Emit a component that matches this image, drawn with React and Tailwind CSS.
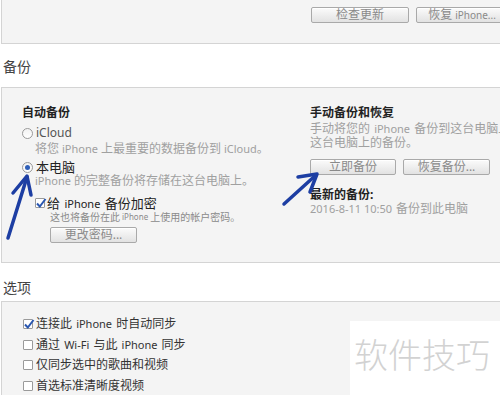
import React from "react";

const font = "font-['Noto_Sans','Noto_Sans_CJK_SC',sans-serif]";

function Btn({ children, w }) {
  return (
    <div
      className={`h-[16px] ${w} shrink-0 rounded-[2px] border border-[#a9a9a9] bg-gradient-to-b from-[#fbfbfb] to-[#e2e2e2] flex items-center justify-center text-[12px] leading-none text-[#8a8a8a] shadow-[inset_0_1px_0_#fff]`}
    >
      {children}
    </div>
  );
}

function Radio({ on }) {
  return (
    <div className="w-[11px] h-[11px] rounded-full border border-[#9a9a9a] bg-gradient-to-b from-[#f2f2f2] to-white flex items-center justify-center shrink-0">
      {on && <div className="w-[5px] h-[5px] rounded-full bg-[#2f5fb8]" />}
    </div>
  );
}

function Check({ on }) {
  return (
    <div className="w-[10px] h-[10px] border border-[#9a9a9a] bg-white rounded-[1px] shrink-0 relative">
      {on && (
        <svg className="absolute -left-[1px] -top-[2px]" width="12" height="12" viewBox="0 0 12 12">
          <path d="M2 6.5 L4.8 9.5 L10.5 2" fill="none" stroke="#2a57b0" strokeWidth="2" />
        </svg>
      )}
    </div>
  );
}

function Row({ children, className = "" }) {
  return <div className={`h-[14px] leading-[14px] flex items-center whitespace-nowrap ${className}`}>{children}</div>;
}

export default function App() {
  return (
    <div className={`relative w-[500px] h-[395px] overflow-hidden bg-white ${font} text-[12px] text-[#333]`}>
      {/* top panel */}
      <div className="h-[44px] ml-[1px] border-l border-b border-[#d4d4d4] bg-[#f4f4f4] flex justify-start pl-[309px] pt-[7px] gap-[7px] w-[540px]">
        <Btn w="w-[98px]">检查更新</Btn>
        <Btn w="w-[92px]">
          恢复 <span className="text-[10px] ml-[3px]">iPhone...</span>
        </Btn>
      </div>

      {/* 备份 */}
      <div className="h-[43px] flex items-center pl-[3px] pt-[1px] text-[14px] text-[#444]">备份</div>

      <div className="h-[176px] ml-[1px] w-[540px] border border-[#d4d4d4] bg-[#f4f4f4] flex">
        {/* left column */}
        <div className="w-[308px] shrink-0 pl-[20px] pt-[18px]">
          <Row className="font-bold text-[#222]">自动备份</Row>
          <Row className="mt-[6px] gap-[3px]">
            <Radio />
            <span className="text-[#555]">iCloud</span>
          </Row>
          <Row className="mt-[2px] pl-[13px] text-[#a0a0a0]">
            将您 <span className="text-[11px] mx-[3px]">iPhone</span> 上最重要的数据备份到 <span className="text-[11px] ml-[3px]">iCloud</span>。
          </Row>
          <Row className="mt-[4px] gap-[3px]">
            <Radio on />
            <span className="text-[#222] text-[13px]">本电脑</span>
          </Row>
          <Row className="pl-[13px] text-[#a0a0a0]">
            <span className="text-[11px] mr-[3px]">iPhone</span> 的完整备份将存储在这台电脑上。
          </Row>
          <Row className="mt-[8px] pl-[13px] gap-[2px]">
            <Check on />
            <span className="text-[#222] text-[13px]">
              给 <span className="text-[11px] mx-[1px]">iPhone</span> 备份加密
            </span>
          </Row>
          <Row className="pl-[28px] text-[10px] text-[#8a8a8a]">
            这也将备份在此 <span className="text-[8px] mx-[2px]">iPhone</span> 上使用的帐户密码。
          </Row>
          <div className="mt-[3px] pl-[28px]">
            <Btn w="w-[87px]">更改密码...</Btn>
          </div>
        </div>

        {/* right column */}
        <div className="shrink-0 pt-[18px]">
          <Row className="font-bold text-[#222]">手动备份和恢复</Row>
          <div className="mt-[2px] leading-[14px] text-[#a0a0a0] whitespace-nowrap">
            <div>
              手动将您的 <span className="text-[11px] mx-[1px]">iPhone</span> 备份到这台电脑上或手动恢复存储在
            </div>
            <div>这台电脑上的备份。</div>
          </div>
          <div className="mt-[9px] flex gap-[7px]">
            <Btn w="w-[86px]">立即备份</Btn>
            <Btn w="w-[87px]">恢复备份...</Btn>
          </div>
          <Row className="mt-[13px] font-bold text-[#222]">最新的备份:</Row>
          <div className="h-[13px] leading-[13px] flex items-center text-[#a0a0a0] whitespace-nowrap">
            <span className="text-[11px] mr-[4px]">2016-8-11 10:50</span>备份到此电脑
          </div>
        </div>
      </div>

      {/* 选项 */}
      <div className="h-[38px] flex items-center pl-[3px] pt-[10px] text-[14px] text-[#444]">选项</div>

      <div className="h-[120px] ml-[1px] w-[540px] border border-[#d4d4d4] bg-[#f4f4f4] pl-[21px] pt-[15px] flex flex-col gap-[6.5px]">
        <Row className="gap-[3px]">
          <Check on />
          <span>
            连接此 <span className="text-[11px] mx-[1px]">iPhone</span> 时自动同步
          </span>
        </Row>
        <Row className="gap-[3px]">
          <Check />
          <span>
            通过 <span className="text-[11px] mx-[1px]">Wi-Fi</span> 与此 <span className="text-[11px] mx-[1px]">iPhone</span> 同步
          </span>
        </Row>
        <Row className="gap-[3px]">
          <Check />
          <span>仅同步选中的歌曲和视频</span>
        </Row>
        <Row className="gap-[3px]">
          <Check />
          <span>首选标准清晰度视频</span>
        </Row>
      </div>

      {/* watermark */}
      <div className="absolute left-[350px] top-[321px] w-[150px] h-[74px] bg-white pl-[4px] pt-[15px]">
        <span className="text-[34px] leading-[38px] font-light text-[#d2d2d2] whitespace-nowrap">软件技巧</span>
      </div>

      {/* arrows */}
      <svg className="absolute left-0 top-0 pointer-events-none" width="500" height="395">
        <g fill="none" stroke="#1d3ea3" strokeWidth="3.5" strokeLinecap="round" strokeLinejoin="round">
          <path d="M8 238 L27 177" />
          <path d="M13 193 L27 176 L31 195" />
          <path d="M284 204 L316 175" />
          <path d="M298 177 L317 174 L310 192" />
        </g>
      </svg>
    </div>
  );
}
